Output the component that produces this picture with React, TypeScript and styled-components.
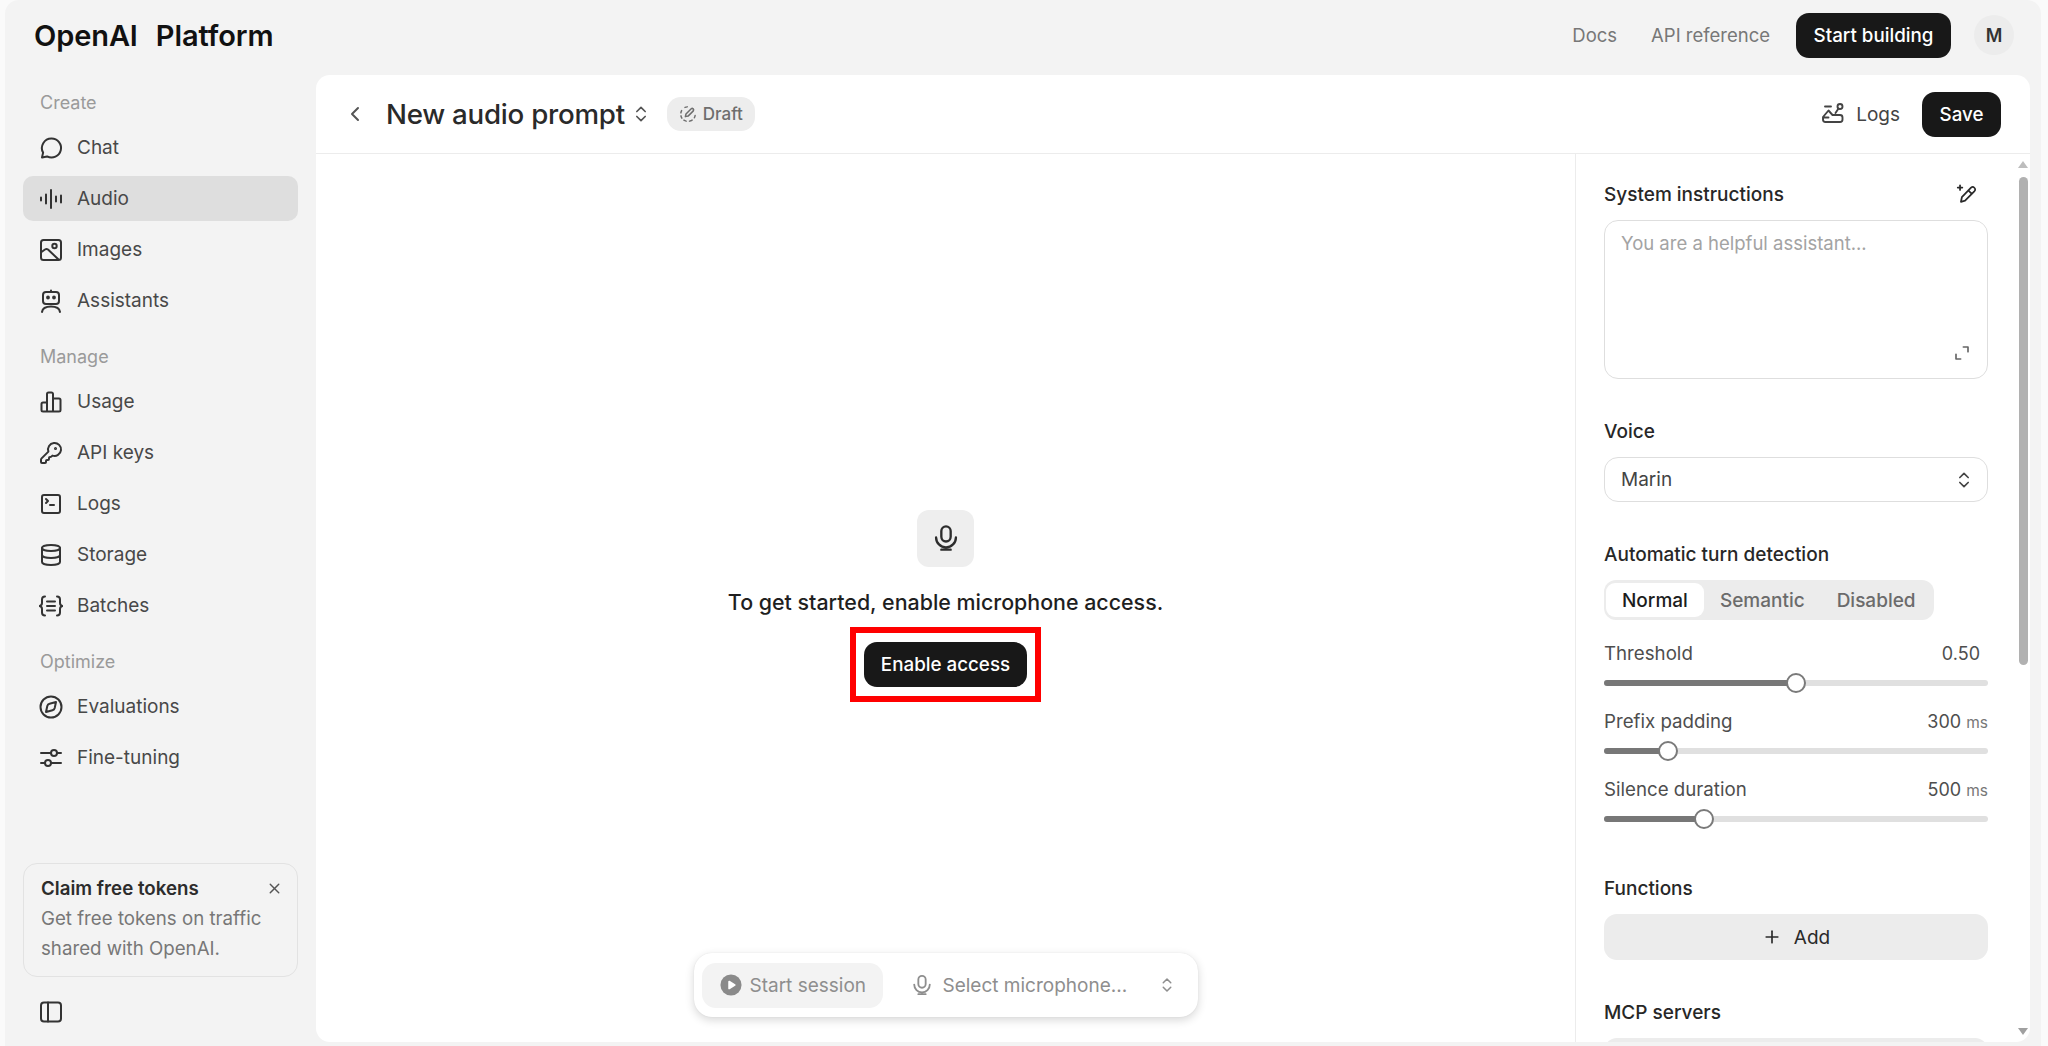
import { FC, ReactNode } from 'react'
import styled, { createGlobalStyle } from 'styled-components'
import { ChevronLeft, ChevronsUpDown, Database, KeyRound, Plus, SquareTerminal, X } from 'lucide-react'

const GlobalStyle = createGlobalStyle`
  html, body {
    margin: 0;
    height: 100%;
    overflow: hidden;
    background: #fafafa;
  }
  body {
    font-family: Inter, 'Noto Sans', sans-serif;
    color: #1d1d1d;
  }
  * {
    box-sizing: border-box;
  }
`

const Frame = styled.div`
  display: grid;
  grid-template-columns: 311px 1fr;
  grid-template-rows: 75px 1fr;
  height: 1046px;
  margin: 0 7px 0 5px;
  padding-right: 11px;
  background: #f3f3f3;
  border-radius: 14px 14px 0 0;
`

const TopBar = styled.header`
  grid-column: 1 / 3;
  display: flex;
  align-items: center;
  justify-content: space-between;
  padding: 0 16px 5px 29px;
`

const Logo = styled.div`
  display: flex;
  gap: 18px;
  font-size: 29px;
  font-weight: 600;
  letter-spacing: -0.1px;
  color: #111;
`

const TopActions = styled.nav`
  display: flex;
  align-items: center;
`

const TopLink = styled.span`
  margin-right: 34px;
  font-size: 18.5px;
  color: #777;

  &:nth-child(2) {
    margin-right: 26px;
  }
`

const DarkButton = styled.button`
  height: 45px;
  padding: 0 17.5px;
  border: 0;
  border-radius: 13px;
  background: #181818;
  color: #fff;
  font-family: inherit;
  font-size: 18.8px;
  font-weight: 500;
`

const Avatar = styled.div`
  display: flex;
  align-items: center;
  justify-content: center;
  width: 40px;
  height: 40px;
  margin-left: 23px;
  border-radius: 50%;
  background: #ececec;
  font-size: 18px;
  font-weight: 600;
  color: #333;
`

const Sidebar = styled.aside`
  display: flex;
  flex-direction: column;
  padding: 11px 18px 22px;
  color: #444;
`

const NavSection = styled.section`
  display: flex;
  flex-direction: column;
  gap: 6px;
  margin-bottom: 17px;
`

const NavHeading = styled.div`
  display: flex;
  align-items: center;
  height: 33px;
  padding-left: 17px;
  font-size: 18px;
  color: #9a9a9a;
`

const NavItem = styled.a<{ $active?: boolean }>`
  display: flex;
  align-items: center;
  gap: 14px;
  height: 45px;
  padding-left: 16px;
  border-radius: 10px;
  background: ${({ $active }) => ($active ? '#dedede' : 'transparent')};
  font-size: 19px;
  color: #484848;

  svg {
    flex: none;
    width: 24px;
    height: 24px;
    color: #333;
  }
`

const PromoCard = styled.div`
  position: relative;
  margin-top: auto;
  height: 114px;
  padding: 10px 17px;
  border: 1.5px solid #e2e2e2;
  border-radius: 14px;
`

const PromoTitle = styled.div`
  font-size: 18.7px;
  font-weight: 600;
  line-height: 30px;
  color: #2c2c2c;
`

const PromoText = styled.div`
  font-size: 18.7px;
  line-height: 29.5px;
  color: #777;
`

const PromoClose = styled.span`
  position: absolute;
  top: 16px;
  right: 14px;
  display: flex;
  color: #555;
`

const PanelToggle = styled.div`
  display: flex;
  margin: 23px 0 0 16px;
  color: #333;
`

const Panel = styled.main`
  display: flex;
  flex-direction: column;
  height: 967px;
  border-radius: 14px;
  background: #fff;
  overflow: hidden;
`

const PanelHeader = styled.div`
  display: flex;
  flex: none;
  align-items: center;
  height: 79px;
  padding: 0 29px 0 27px;
  border-bottom: 1.5px solid #ececec;
`

const BackButton = styled.span`
  display: flex;
  margin-right: 19px;
  color: #555;
`

const PromptTitle = styled.h1`
  margin: 0 6px 0 0;
  font-size: 27.7px;
  font-weight: 500;
  letter-spacing: -0.25px;
  color: #2a2a2a;
`

const TitleChevron = styled.span`
  display: flex;
  color: #555;
`

const DraftPill = styled.span`
  display: flex;
  align-items: center;
  gap: 6px;
  height: 34px;
  margin-left: 16px;
  padding: 0 12px;
  border-radius: 14px;
  background: #ededed;
  font-size: 17px;
  font-weight: 500;
  color: #6e6e6e;
`

const HeaderActions = styled.div`
  display: flex;
  align-items: center;
  margin-left: auto;
`

const LogsLink = styled.span`
  display: flex;
  align-items: center;
  gap: 11px;
  margin-right: 22px;
  font-size: 19px;
  color: #444;
`

const PanelBody = styled.div`
  display: flex;
  flex: 1;
  min-height: 0;
`

const Stage = styled.div`
  position: relative;
  display: flex;
  flex: 1;
  flex-direction: column;
  align-items: center;
  justify-content: center;
  padding-top: 15px;
`

const MicTile = styled.div`
  display: flex;
  align-items: center;
  justify-content: center;
  width: 57px;
  height: 57px;
  margin-bottom: 23px;
  border-radius: 12px;
  background: #eeeeee;
  color: #2c2c2c;
`

const StageText = styled.p`
  margin: 0 0 13px;
  font-size: 21.4px;
  font-weight: 500;
  line-height: 24px;
  color: #1f1f1f;
`

const Highlight = styled.div`
  padding: 9px 8px;
  border: 6px solid #ff0000;

  ${DarkButton} {
    padding: 0 16.5px;
  }
`

const SessionBar = styled.div`
  position: absolute;
  bottom: 25px;
  left: 50%;
  display: flex;
  align-items: center;
  width: 504px;
  height: 64px;
  padding: 0 8px;
  transform: translateX(-50%);
  border-radius: 18px;
  background: #fff;
  box-shadow: 0 3px 10px rgba(0, 0, 0, 0.16), 0 0 1px rgba(0, 0, 0, 0.12);
  font-size: 19px;
  color: #8e8e8e;
`

const StartSession = styled.div`
  display: flex;
  flex: none;
  align-items: center;
  gap: 8px;
  width: 181px;
  height: 45px;
  padding-left: 18px;
  border-radius: 14px;
  background: #f3f3f3;
`

const MicSelect = styled.div`
  display: flex;
  flex: 1;
  align-items: center;
  gap: 10px;
  padding: 0 14px 0 28px;

  > :last-child {
    margin-left: auto;
  }
`

const Settings = styled.div`
  display: flex;
  flex: none;
  width: 455px;
  border-left: 1.5px solid #ececec;
`

const SettingsBody = styled.div`
  flex: 1;
  min-width: 0;
  padding: 28px 27px 0 28px;
  overflow: hidden;
`

const FieldLabel = styled.div`
  display: flex;
  align-items: center;
  justify-content: space-between;
  height: 24px;
  margin-bottom: 14px;
  font-size: 19px;
  font-weight: 500;
  color: #272727;
`

const Field = styled.section`
  margin-bottom: 40px;
`

const WandSlot = styled.span`
  display: flex;
  margin-right: 11px;
  color: #2a2a2a;
`

const PromptBox = styled.div`
  position: relative;
  height: 159px;
  padding: 10px 16px;
  border: 1.5px solid #dedede;
  border-radius: 14px;
  font-size: 18.5px;
  line-height: 24px;
  color: #a3a3a3;
`

const ExpandIcon = styled.span`
  position: absolute;
  right: 17px;
  bottom: 17px;
  display: flex;
  color: #666;
`

const SelectBox = styled.div`
  display: flex;
  align-items: center;
  justify-content: space-between;
  height: 45px;
  padding: 0 13px 0 16px;
  border: 1.5px solid #dedede;
  border-radius: 14px;
  font-size: 19px;
  color: #444;
`

const Tabs = styled.div`
  display: inline-flex;
  align-items: center;
  height: 40px;
  margin-bottom: 22px;
  padding: 0 2px;
  border-radius: 12px;
  background: #ececec;
`

const Tab = styled.span<{ $active?: boolean }>`
  display: flex;
  align-items: center;
  height: 34px;
  padding: 0 16px;
  border-radius: 9px;
  background: ${({ $active }) => ($active ? '#fff' : 'transparent')};
  font-size: 19px;
  font-weight: 500;
  color: ${({ $active }) => ($active ? '#1c1c1c' : '#6b6b6b')};
`

const SliderBlock = styled.div`
  margin-bottom: 17px;

  &:last-child {
    margin-bottom: 47px;
  }
`

const SliderLabels = styled.div`
  display: flex;
  justify-content: space-between;
  height: 24px;
  margin-bottom: 7px;
  font-size: 18.7px;
  line-height: 24px;
  color: #4e4e4e;
`

const SliderValue = styled.span`
  font-size: 18px;
`

const Unit = styled.span`
  font-size: 15.5px;
  color: #777;
`

const ValuePad = styled(SliderValue)`
  padding-right: 8px;
`

const SliderTrack = styled.div`
  position: relative;
  height: 20px;

  &::before {
    content: '';
    position: absolute;
    top: 7px;
    left: 0;
    right: 0;
    height: 6px;
    border-radius: 3px;
    background: #e0e0e0;
  }
`

const SliderFill = styled.div`
  position: absolute;
  top: 7px;
  left: 0;
  height: 6px;
  border-radius: 3px;
  background: #777;
`

const SliderThumb = styled.div`
  position: absolute;
  top: 0;
  width: 20px;
  height: 20px;
  margin-left: -10px;
  border: 2.5px solid #7a7a7a;
  border-radius: 50%;
  background: #fff;
`

const AddButton = styled.div`
  display: flex;
  align-items: center;
  justify-content: center;
  gap: 12px;
  height: 46px;
  border-radius: 13px;
  background: #ececec;
  font-size: 19px;
  color: #2a2a2a;
`

const Scrollbar = styled.div`
  display: flex;
  flex: none;
  flex-direction: column;
  align-items: center;
  width: 15px;
  padding-top: 7px;
  padding-left: 1px;
`

const ScrollArrow = styled.div<{ $down?: boolean }>`
  width: 0;
  height: 0;
  border-left: 5px solid transparent;
  border-right: 5px solid transparent;
  border-bottom: ${({ $down }) => ($down ? '0' : '7px solid #bdbdbd')};
  border-top: ${({ $down }) => ($down ? '7px solid #a0a0a0' : '0')};
  margin-top: ${({ $down }) => ($down ? 'auto' : '0')};
  margin-bottom: ${({ $down }) => ($down ? '7px' : '0')};
`

const ScrollThumb = styled.div`
  width: 9px;
  height: 488px;
  margin-top: 9px;
  border-radius: 5px;
  background: #b1b1b1;
`

const Svg: FC<{ size?: number; width?: number; children: ReactNode }> = ({ size = 24, width = 2, children }) => (
  <svg
    width={size}
    height={size}
    viewBox="0 0 24 24"
    fill="none"
    stroke="currentColor"
    strokeWidth={width}
    strokeLinecap="round"
    strokeLinejoin="round"
  >
    {children}
  </svg>
)

const ChatIcon = () => (
  <Svg>
    <path d="M12.5 2.500a9.500 9.500 0 1 1-4.400 17.900L3 21.500l1.100-4.900A9.500 9.500 0 0 1 12.500 2.500z" />
  </Svg>
)

const AudioIcon = () => (
  <Svg>
    <path d="M2 10.500v3M7 7.500v9M12 3v18M17 9.500v5M22 8.500v7" />
  </Svg>
)

const ImageIcon = () => (
  <Svg>
    <rect x="2" y="2" width="20" height="20" rx="2.500" />
    <circle cx="15.500" cy="8" r="2.200" />
    <path d="M2.500 14l3.500-2.500c1-.6 2-.6 3 0L19 21" />
  </Svg>
)

const BotIcon = () => (
  <Svg>
    <rect x="4" y="3" width="16" height="12" rx="3" />
    <path d="M12 3V1.500M3 23c.5-3.500 4-5.500 9-5.500s8.500 2 9 5.500" />
    <circle cx="9" cy="8.500" r=".9" fill="currentColor" />
    <circle cx="15" cy="8.500" r=".9" fill="currentColor" />
  </Svg>
)

const UsageIcon = () => (
  <Svg>
    <path d="M8 21.500H4a1.500 1.500 0 0 1-1.500-1.500v-6A1.500 1.500 0 0 1 4 12.500h4M8 21.500V4a1.500 1.500 0 0 1 1.500-1.500h3A1.500 1.500 0 0 1 14 4v17.500M8 21.500h12a1.500 1.500 0 0 0 1.500-1.500V10A1.500 1.500 0 0 0 20 8.500h-6" />
  </Svg>
)

const BatchesIcon = () => (
  <Svg>
    <path d="M6 2.500c-2 0-3 1-3 3V9c0 1.500-.7 2.500-2.300 3C2.300 12.500 3 13.500 3 15v3.500c0 2 1 3 3 3M18 2.500c2 0 3 1 3 3V9c0 1.500.7 2.500 2.300 3-1.600.5-2.300 1.500-2.300 3v3.500c0 2-1 3-3 3M8 7.500h8M8 12h8M8 16.500h8" />
  </Svg>
)

const CompassIcon = () => (
  <Svg>
    <circle cx="12" cy="12" r="10.500" />
    <path d="M17 7l-1.300 6c-.3 1.200-1 1.900-2.200 2.200L7 17l1.300-6c.3-1.200 1-1.900 2.200-2.200L17 7z" />
  </Svg>
)

const TuningIcon = () => (
  <Svg>
    <path d="M2 7h10M18 7h4M2 17h4M12 17h10" />
    <circle cx="15" cy="7" r="3" />
    <circle cx="9" cy="17" r="3" />
  </Svg>
)

const PanelIcon = () => (
  <Svg>
    <rect x="2" y="2.500" width="20" height="19" rx="3" />
    <path d="M9 2.500v19" />
  </Svg>
)

const MicIcon: FC<{ size: number }> = ({ size }) => (
  <Svg size={size}>
    <rect x="8" y="2" width="8" height="13" rx="4" />
    <path d="M3.500 11.500a8.500 8.500 0 0 0 17 0M12 20v2M8 22h8" />
  </Svg>
)

const DraftIcon = () => (
  <Svg size={18}>
    <path d="M8 3.200a9 9 0 0 1 3-.7M3.500 7.500a9 9 0 0 0-1 3M2.600 14.500a9 9 0 0 0 1.200 3M6.500 20.300a9 9 0 0 0 3 1.200M14 21.500a9 9 0 0 0 3.500-1.300M20.500 17a9 9 0 0 0 1-3" />
    <path d="M8.500 15.500l.8-3.500 7-7a2 2 0 0 1 2.800 2.800l-7 7-3.600.7z" />
  </Svg>
)

const LogsIcon = () => (
  <Svg size={24} width={1.900}>
    <circle cx="19" cy="4.500" r="2.500" />
    <path d="M17.500 6.500L14.500 11M2 15l5.500-6.500 4 4.500h7.500c1.500 0 2.500 1 2.500 2.500v2c0 1.500-1 2.500-2.500 2.500H4.500C3 20 2 19 2 17.500V15zM2.500 15.500h5M4 4.500h6" />
  </Svg>
)

const WandIcon = () => (
  <Svg size={22} width={1.900}>
    <path d="M6.500 20.500l1-5L17.500 5a2.700 2.700 0 0 1 3.800 3.800L11 19.300l-4.500 1.200zM14.500 8l3.800 3.800" />
    <path d="M5.500 2.500v5M3 5h5" />
  </Svg>
)

const ExpandCorners = () => (
  <Svg size={16} width={2.500}>
    <path d="M14 3h7v7M3 14v7h7" />
  </Svg>
)

const PlayIcon = () => (
  <svg width="22" height="22" viewBox="0 0 24 24">
    <circle cx="12" cy="12" r="11.500" fill="#8a8a8a" />
    <path d="M9 8.300c0-.8.800-1.300 1.500-.9l6 3.700c.7.400.7 1.400 0 1.800l-6 3.700c-.7.400-1.500-.1-1.500-.9V8.300z" fill="#fff" />
  </svg>
)

const navSections = [
  {
    title: 'Create',
    items: [
      { label: 'Chat', icon: <ChatIcon /> },
      { label: 'Audio', icon: <AudioIcon />, active: true },
      { label: 'Images', icon: <ImageIcon /> },
      { label: 'Assistants', icon: <BotIcon /> },
    ],
  },
  {
    title: 'Manage',
    items: [
      { label: 'Usage', icon: <UsageIcon /> },
      { label: 'API keys', icon: <KeyRound strokeWidth={2} /> },
      { label: 'Logs', icon: <SquareTerminal strokeWidth={2} /> },
      { label: 'Storage', icon: <Database strokeWidth={2} /> },
      { label: 'Batches', icon: <BatchesIcon /> },
    ],
  },
  {
    title: 'Optimize',
    items: [
      { label: 'Evaluations', icon: <CompassIcon /> },
      { label: 'Fine-tuning', icon: <TuningIcon /> },
    ],
  },
]

const sliders = [
  { label: 'Threshold', value: '0.50', percent: 49.9 },
  { label: 'Prefix padding', value: '300', unit: 'ms', percent: 16.7 },
  { label: 'Silence duration', value: '500', unit: 'ms', percent: 26.1 },
]

const App: FC = () => {
  return (
    <>
      <GlobalStyle />
      <Frame>
        <TopBar>
          <Logo>
            <span>OpenAI</span>
            <span>Platform</span>
          </Logo>
          <TopActions>
            <TopLink>Docs</TopLink>
            <TopLink>API reference</TopLink>
            <DarkButton>Start building</DarkButton>
            <Avatar>M</Avatar>
          </TopActions>
        </TopBar>

        <Sidebar>
          {navSections.map((section) => (
            <NavSection key={section.title}>
              <NavHeading>{section.title}</NavHeading>
              {section.items.map((item) => (
                <NavItem key={item.label} $active={item.active}>
                  {item.icon}
                  {item.label}
                </NavItem>
              ))}
            </NavSection>
          ))}
          <PromoCard>
            <PromoTitle>Claim free tokens</PromoTitle>
            <PromoText>
              Get free tokens on traffic
              <br />
              shared with OpenAI.
            </PromoText>
            <PromoClose>
              <X size={17} strokeWidth={2} />
            </PromoClose>
          </PromoCard>
          <PanelToggle>
            <PanelIcon />
          </PanelToggle>
        </Sidebar>

        <Panel>
          <PanelHeader>
            <BackButton>
              <ChevronLeft size={24} strokeWidth={2} />
            </BackButton>
            <PromptTitle>New audio prompt</PromptTitle>
            <TitleChevron>
              <ChevronsUpDown size={20} strokeWidth={2} />
            </TitleChevron>
            <DraftPill>
              <DraftIcon />
              Draft
            </DraftPill>
            <HeaderActions>
              <LogsLink>
                <LogsIcon />
                Logs
              </LogsLink>
              <DarkButton>Save</DarkButton>
            </HeaderActions>
          </PanelHeader>

          <PanelBody>
            <Stage>
              <MicTile>
                <MicIcon size={28} />
              </MicTile>
              <StageText>To get started, enable microphone access.</StageText>
              <Highlight>
                <DarkButton>Enable access</DarkButton>
              </Highlight>
              <SessionBar>
                <StartSession>
                  <PlayIcon />
                  Start session
                </StartSession>
                <MicSelect>
                  <MicIcon size={22} />
                  Select microphone...
                  <ChevronsUpDown size={18} strokeWidth={2} />
                </MicSelect>
              </SessionBar>
            </Stage>

            <Settings>
              <SettingsBody>
                <Field>
                  <FieldLabel>
                    System instructions
                    <WandSlot>
                      <WandIcon />
                    </WandSlot>
                  </FieldLabel>
                  <PromptBox>
                    You are a helpful assistant...
                    <ExpandIcon>
                      <ExpandCorners />
                    </ExpandIcon>
                  </PromptBox>
                </Field>

                <Field>
                  <FieldLabel>Voice</FieldLabel>
                  <SelectBox>
                    Marin
                    <ChevronsUpDown size={20} strokeWidth={2} />
                  </SelectBox>
                </Field>

                <Field>
                  <FieldLabel>Automatic turn detection</FieldLabel>
                  <Tabs>
                    <Tab $active>Normal</Tab>
                    <Tab>Semantic</Tab>
                    <Tab>Disabled</Tab>
                  </Tabs>
                  {sliders.map((slider) => (
                    <SliderBlock key={slider.label}>
                      <SliderLabels>
                        <span>{slider.label}</span>
                        {slider.unit ? (
                          <SliderValue>
                            {slider.value} <Unit>{slider.unit}</Unit>
                          </SliderValue>
                        ) : (
                          <ValuePad>{slider.value}</ValuePad>
                        )}
                      </SliderLabels>
                      <SliderTrack>
                        <SliderFill style={{ width: `${slider.percent}%` }} />
                        <SliderThumb style={{ left: `${slider.percent}%` }} />
                      </SliderTrack>
                    </SliderBlock>
                  ))}
                </Field>

                <Field>
                  <FieldLabel>Functions</FieldLabel>
                  <AddButton>
                    <Plus size={20} strokeWidth={2} />
                    Add
                  </AddButton>
                </Field>

                <Field>
                  <FieldLabel>MCP servers</FieldLabel>
                  <AddButton />
                </Field>
              </SettingsBody>
              <Scrollbar>
                <ScrollArrow />
                <ScrollThumb />
                <ScrollArrow $down />
              </Scrollbar>
            </Settings>
          </PanelBody>
        </Panel>
      </Frame>
    </>
  )
}

export default App
